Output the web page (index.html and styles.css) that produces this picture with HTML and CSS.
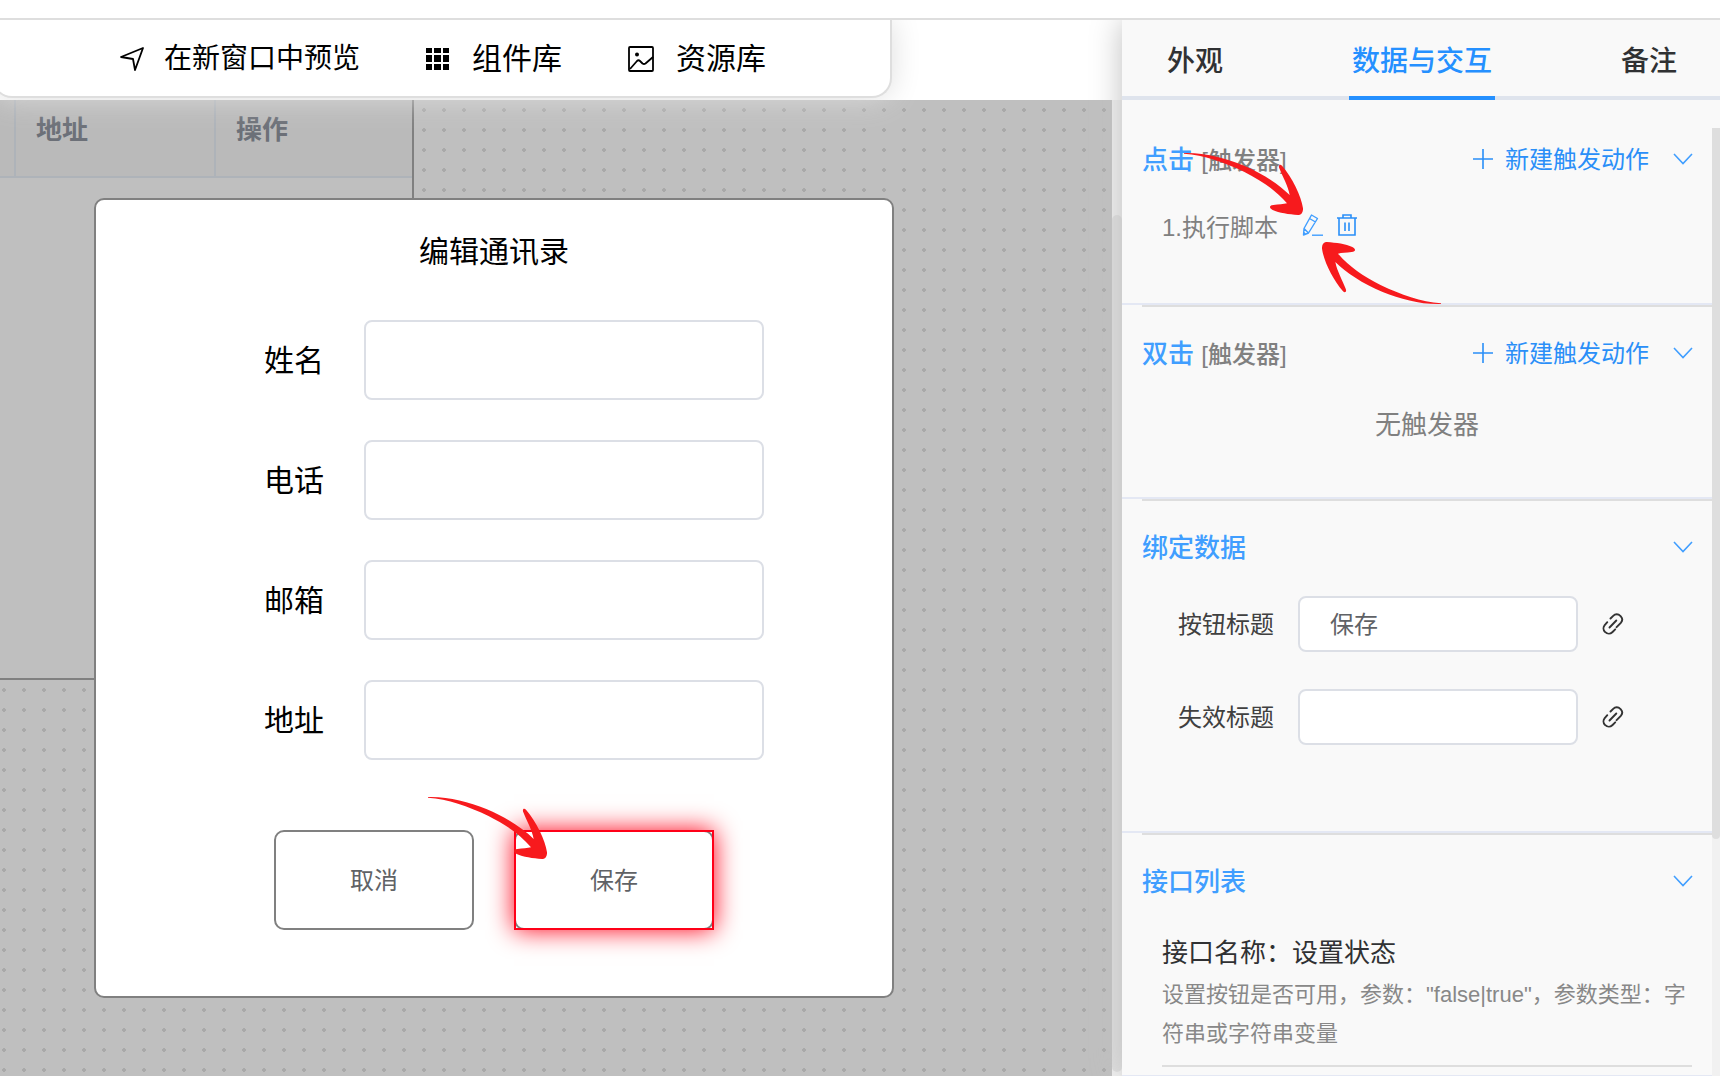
FILE: index.html
```html
<!DOCTYPE html>
<html lang="zh-CN">
<head>
    <meta charset="UTF-8">
    <meta name="viewport" content="width=device-width, initial-scale=1.0">
    <title>页面编辑器</title>
    <link rel="stylesheet" href="styles.css">
</head>
<body>
    <!-- shared shapes -->
    <svg class="defs" width="0" height="0">
        <symbol id="arrow" viewBox="0 0 357 192">
            <path fill="#f71a1d" d="M0 6C60 4 120 20 175 42C235 67 285 100 317 132C312 105 295 75 286 52C282 42 288 38 294 44C325 80 352 135 357 172C358 186 350 193 342 192C315 190 285 186 266 177C254 170 256 163 268 162C285 160 298 160 309 157C275 118 235 90 180 62C120 34 60 12 0 8Z"/>
        </symbol>
        <symbol id="down" viewBox="0 0 20 12">
            <path fill="none" stroke="currentColor" stroke-width="1.6" d="M1 1l9 9.5L19 1"/>
        </symbol>
        <symbol id="plus" viewBox="0 0 20 20">
            <path fill="none" stroke="currentColor" stroke-width="1.6" d="M10 0v20M0 10h20"/>
        </symbol>
        <symbol id="link" viewBox="0 0 22 22">
            <g fill="none" stroke="#333" stroke-width="1.9" stroke-linecap="round">
                <path d="M8.5 5.5l2.7-2.7a5 5 0 0 1 7.1 0l.5.5a5 5 0 0 1 0 6.6l-4.2 4.3"/>
                <path d="M5.3 9.2l-2.6 2.9a5 5 0 0 0 .2 6.7l.4.4a5 5 0 0 0 7 0l2.9-2.9"/>
                <path d="M7.5 14.5l6.8-7"/>
            </g>
        </symbol>
    </svg>

    <div class="topline"></div>
    <div class="main">
        <div class="workspace">
            <div class="header">
                <div class="toolbar">
                    <button class="tool preview">
                        <svg width="24" height="24" viewBox="0 0 24 24"><path fill="none" stroke="#000" stroke-width="1.8" stroke-linejoin="round" d="M23 1L1 10l12 2 2 11z"/></svg>
                        在新窗口中预览
                    </button>
                    <button class="tool">
                        <svg width="24" height="24" viewBox="0 0 24 24"><path d="M0 1h6v5H0zM8 1h7v5H8zM17 1h6v5h-6zM0 8h6v7H0zM8 8h7v7H8zM17 8h6v7h-6zM0 17h6v6H0zM8 17h7v6H8zM17 17h6v6h-6z"/></svg>
                        组件库
                    </button>
                    <button class="tool">
                        <svg width="26" height="26" viewBox="0 0 26 26"><g fill="none" stroke="#000" stroke-width="1.8" stroke-linejoin="round"><rect x="1" y="1" width="24" height="24" rx="1"/><path d="M2 23l7-8q1.500-1.500 3 0l2.500 2.500q1.500 1 3 0L25 11"/></g><circle cx="9" cy="8.500" r="2"/></svg>
                        资源库
                    </button>
                </div>
            </div>

            <div class="stage">
                <div class="canvas">
                    <div class="table-box">
                        <table class="contacts">
                            <thead>
                                <tr><th class="col-cut"></th><th>地址</th><th>操作</th></tr>
                            </thead>
                        </table>
                    </div>

                    <form class="dialog">
                        <h2>编辑通讯录</h2>
                        <div class="field">
                            <label for="name">姓名</label>
                            <input type="text" id="name">
                        </div>
                        <div class="field">
                            <label for="phone">电话</label>
                            <input type="text" id="phone">
                        </div>
                        <div class="field">
                            <label for="mail">邮箱</label>
                            <input type="text" id="mail">
                        </div>
                        <div class="field">
                            <label for="address">地址</label>
                            <input type="text" id="address">
                        </div>
                        <div class="actions">
                            <button type="button">取消</button>
                            <span class="selected"><button type="button">保存</button></span>
                        </div>
                        <svg class="arrow arrow-save"><use href="#arrow"/></svg>
                    </form>
                </div>
                <div class="stage-scroll"><div class="stage-thumb"></div></div>
            </div>
        </div>

        <div class="panel">
            <div class="tabs">
                <button>外观</button>
                <button class="active">数据与交互</button>
                <button>备注</button>
            </div>

            <div class="panel-body">
                <div class="sections">
                    <section class="trigger">
                        <div class="section-head">
                            <h3>点击 <small>[触发器]</small></h3>
                            <button class="add"><svg width="20" height="20"><use href="#plus"/></svg>新建触发动作</button>
                            <button class="fold" aria-label="折叠"><svg width="20" height="12"><use href="#down"/></svg></button>
                        </div>
                        <div class="step">
                            <span>1.执行脚本</span>
                            <button aria-label="编辑">
                                <svg width="22" height="24" viewBox="0 0 22 24"><g fill="none" stroke="#409eff" stroke-width="1.400" stroke-linejoin="round"><path d="M9.500 2l6 3.500-9 14.500-5 2 .5-6.500zM7.500 5.500l6 3.500M2 15.500l4.500 4.500M1.500 19l2 2.500"/><path d="M10 22.200h11"/></g></svg>
                            </button>
                            <button aria-label="删除">
                                <svg width="22" height="24" viewBox="0 0 22 24"><path fill="none" stroke="#2a8ff8" stroke-width="1.600" d="M1 5h20M3 5v17h16V5M7 5V2h8v3M9 9.500v8.500M13 9.500v8.500"/></svg>
                            </button>
                            <svg class="arrow arrow-in"><use href="#arrow"/></svg>
                            <svg class="arrow arrow-back"><use href="#arrow"/></svg>
                        </div>
                    </section>

                    <section class="trigger">
                        <div class="section-head">
                            <h3>双击 <small>[触发器]</small></h3>
                            <button class="add"><svg width="20" height="20"><use href="#plus"/></svg>新建触发动作</button>
                            <button class="fold" aria-label="折叠"><svg width="20" height="12"><use href="#down"/></svg></button>
                        </div>
                        <p class="empty">无触发器</p>
                    </section>

                    <section class="bind">
                        <div class="section-head">
                            <h3>绑定数据</h3>
                            <button class="fold" aria-label="折叠"><svg width="20" height="12"><use href="#down"/></svg></button>
                        </div>
                        <div class="prop">
                            <label for="title">按钮标题</label>
                            <input type="text" id="title" value="保存">
                            <button aria-label="绑定"><svg width="22" height="22"><use href="#link"/></svg></button>
                        </div>
                        <div class="prop">
                            <label for="disabled-title">失效标题</label>
                            <input type="text" id="disabled-title">
                            <button aria-label="绑定"><svg width="22" height="22"><use href="#link"/></svg></button>
                        </div>
                    </section>

                    <section class="apis">
                        <div class="section-head">
                            <h3>接口列表</h3>
                            <button class="fold" aria-label="折叠"><svg width="20" height="12"><use href="#down"/></svg></button>
                        </div>
                        <div class="api">
                            <h4>接口名称：设置状态</h4>
                            <p>设置按钮是否可用，参数："false|true"，参数类型：字符串或字符串变量</p>
                        </div>
                    </section>
                </div>
                <div class="panel-scroll"><div class="panel-thumb"></div></div>
            </div>
        </div>
    </div>
</body>
</html>
```

FILE: styles.css
```css
* {
    box-sizing: border-box;
}

body {
    font-family: "Liberation Sans", "Noto Sans CJK SC", sans-serif;
    background-color: #fff;
    color: #000;
    margin: 0;
    height: 100vh;
    display: flex;
    flex-direction: column;
    overflow: hidden;
}

h2, h3, h4, p {
    margin: 0;
    font-weight: normal;
}

button {
    font: inherit;
    color: inherit;
    background: none;
    border: none;
    padding: 0;
    cursor: pointer;
}

svg {
    display: block;
    flex: none;
}

.defs {
    position: absolute;
}

.topline {
    flex: none;
    height: 20px;
    border-bottom: 2px solid #dedede;
}

.main {
    flex: 1;
    display: flex;
    min-height: 0;
}

/* left side */

.workspace {
    flex: 1;
    min-width: 0;
    display: flex;
    flex-direction: column;
}

.header {
    position: relative;
    z-index: 1;
    height: 80px;
    clip-path: inset(0 0 -40px 0);
}

.toolbar {
    display: flex;
    align-items: center;
    gap: 66px;
    height: 78px;
    margin: 0 230px 0 -8px;
    padding: 2px 0 0 126px;
    background: #fff;
    border: 2px solid #dedede;
    border-top: none;
    border-radius: 0 0 20px 20px;
    box-shadow: 0 0 30px #ddd;
}

.tool {
    display: flex;
    align-items: center;
    gap: 22px;
    font-size: 30px;
    line-height: 40px;
}

.tool.preview {
    font-size: 28px;
    gap: 20px;
}

.stage {
    flex: 1;
    display: flex;
    min-height: 0;
}

.canvas {
    position: relative;
    flex: 1;
    overflow: hidden;
    background-color: #bfbfbf;
    background-image: radial-gradient(circle, #a9a9a9 2px, transparent 2px);
    background-size: 20px 20px;
    background-position: -6px 0;
}

.stage-scroll {
    width: 10px;
    padding: 115px 0 4px;
    background: #f1f1f1;
}

.stage-thumb {
    height: 100%;
    border-radius: 5px;
    background: #dedede;
}

.table-box {
    position: absolute;
    left: 0;
    top: -20px;
    width: 414px;
    height: 600px;
    background: #bfbfbf;
    border-right: 2px solid #808080;
    border-bottom: 2px solid #808080;
}

.contacts {
    width: 100%;
    table-layout: fixed;
    border-collapse: separate;
    border-spacing: 0;
}

.contacts th {
    height: 98px;
    padding: 0 20px 2px;
    background: #bababa;
    border-right: 2px solid #aeb3b9;
    border-bottom: 2px solid #aeb3b9;
    color: #6c7078;
    font-size: 26px;
    font-weight: bold;
    text-align: left;
}

.contacts .col-cut {
    width: 16px;
    padding: 0;
}

.contacts th:last-child {
    width: 196px;
    border-right: none;
}

.dialog {
    position: absolute;
    left: 94px;
    top: 98px;
    width: 800px;
    height: 800px;
    display: flex;
    flex-direction: column;
    align-items: center;
    gap: 40px;
    padding-top: 32px;
    background: #fff;
    border: 2px solid #808080;
    border-radius: 10px;
}

.dialog h2 {
    font-size: 30px;
    line-height: 40px;
    margin-bottom: 8px;
}

.field {
    display: flex;
    align-items: center;
    gap: 40px;
    margin-right: -40px;
}

.field label {
    padding-bottom: 4px;
    font-size: 30px;
}

.field input {
    width: 400px;
    height: 80px;
    border: 2px solid #dcdfe6;
    border-radius: 8px;
    font-size: 24px;
    padding: 0 20px;
}

.actions {
    display: flex;
    gap: 40px;
    margin-top: 30px;
}

.actions button {
    display: block;
    width: 200px;
    height: 100px;
    padding-bottom: 4px;
    background: #fff;
    border: 2px solid #808080;
    border-radius: 10px;
    color: #606266;
    font-size: 24px;
}

.selected {
    outline: 2px solid #ff0018;
    outline-offset: -2px;
    box-shadow: 0 0 24px #ff0018;
}

.arrow {
    position: absolute;
    width: 119px;
    height: 64px;
    pointer-events: none;
}

.arrow-save {
    left: 332px;
    top: 595px;
}

.arrow-in {
    left: 42px;
    top: -54px;
}

.arrow-back {
    left: 180px;
    top: 37px;
    transform: rotate(180deg);
}

/* right side */

.panel {
    position: relative;
    z-index: 2;
    width: 598px;
    display: flex;
    flex-direction: column;
    background: #f9f9f9;
    box-shadow: 0 0 30px #bfbfbf;
    clip-path: inset(0 0 0 -40px);
}

.tabs {
    flex: none;
    display: flex;
    justify-content: space-between;
    height: 80px;
    padding: 0 40px 0 42px;
    border-bottom: 4px solid #dfe4ed;
    color: #303133;
    font-size: 28px;
    font-weight: 500;
}

.tabs button {
    height: 80px;
    padding: 2px 3px 0;
    border-bottom: 4px solid transparent;
}

.tabs .active {
    color: #2590ff;
    border-color: #2590ff;
}

.panel-body {
    flex: 1;
    display: flex;
    min-height: 0;
}

.sections {
    flex: 1;
    min-width: 0;
    overflow: hidden;
}

section {
    padding: 28px 20px 0;
    border-bottom: 2px solid #e4e8f4;
}

/* second, inset rule under each section border */
section + section {
    padding-top: 26px;
    background: linear-gradient(#dedede, #dedede) 20px 0 / 100% 2px no-repeat;
}

.trigger {
    height: 194px;
}

.trigger:first-child {
    height: 205px;
    padding-top: 37px;
}

.bind {
    height: 334px;
}

.section-head {
    display: flex;
    align-items: center;
    height: 40px;
    color: #2a8ff8;
    font-size: 24px;
}

.section-head h3 {
    flex: 1;
    color: #409eff;
    font-size: 26px;
    font-weight: 500;
}

.section-head small {
    color: #808080;
    font-size: 24px;
}

.section-head svg {
    margin-top: 4px;
}

.add {
    display: flex;
    align-items: center;
    gap: 12px;
}

.fold {
    margin: 0 -1px 0 24px;
    color: #409eff;
}

.step {
    position: relative;
    display: flex;
    align-items: center;
    height: 40px;
    margin-top: 28px;
    padding-left: 20px;
    color: #808080;
    font-size: 24px;
}

.step button {
    margin-left: 12px;
}

.step span {
    margin-right: 12px;
}

.empty {
    margin-top: 34px;
    padding-left: 20px;
    color: #808080;
    font-size: 26px;
    line-height: 40px;
    text-align: center;
}

.prop {
    display: flex;
    align-items: center;
    gap: 24px;
    margin-top: 37px;
    padding-left: 36px;
    font-size: 24px;
    color: #404040;
}

.section-head + .prop {
    margin-top: 31px;
}

.prop label {
    padding-bottom: 4px;
}

.prop input {
    width: 280px;
    height: 56px;
    padding: 0 30px 4px;
    background: #fff;
    border: 2px solid #dcdfe6;
    border-radius: 8px;
    color: #606266;
    font: inherit;
}

.apis {
    padding-bottom: 8px;
}

.api {
    margin: 34px 0 0 20px;
    padding-bottom: 12px;
    border-bottom: 2px solid #dedede;
}

.api h4 {
    margin-bottom: 2px;
    color: #303133;
    font-size: 26px;
    line-height: 40px;
}

.api p {
    color: #888;
    font-size: 22px;
    line-height: 39px;
}

.panel-scroll {
    width: 8px;
    margin-top: 28px;
    background: #f1f1f1;
}

.panel-thumb {
    height: 75%;
    border-radius: 0 0 4px 4px;
    background: #dedede;
}
```
